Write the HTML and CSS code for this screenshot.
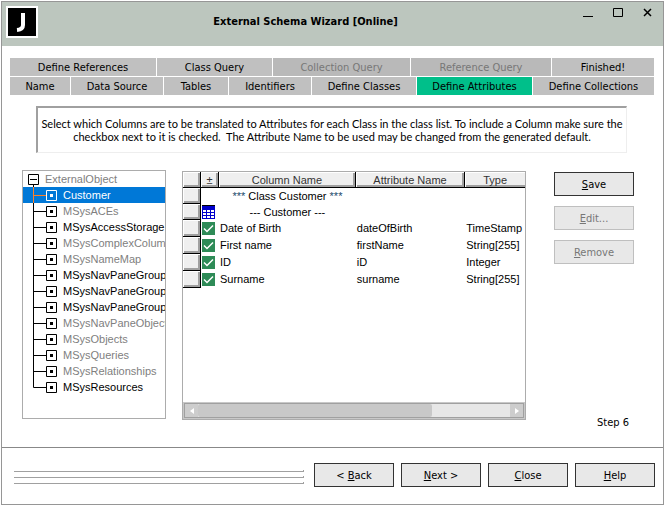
FILE: index.html
```html
<!DOCTYPE html>
<html lang="en">
<head>
    <meta charset="UTF-8">
    <meta name="viewport" content="width=device-width, initial-scale=1.0">
    <title>External Schema Wizard</title>
    <link rel="stylesheet" href="styles.css">
</head>
<body>
    <svg class="defs" width="0" height="0">
        <symbol id="node" viewBox="0 0 34 16">
            <path class="line" d="M10.5 0V16M11 8.5H23"/>
            <path class="box" d="M23.5 3.5h10v10h-10z"/>
            <path class="dot" d="M27 7h3v3h-3z"/>
        </symbol>
        <symbol id="node-last" viewBox="0 0 34 16">
            <path class="line" d="M10.5 0V8.5H23"/>
            <path class="box" d="M23.5 3.5h10v10h-10z"/>
            <path class="dot" d="M27 7h3v3h-3z"/>
        </symbol>
    </svg>

    <div class="window">
        <header class="titlebar">
            <svg class="logo" width="32" height="32" viewBox="0 0 32 32">
                <rect width="32" height="32" fill="#fff"/>
                <rect x="2" y="2" width="28" height="28" fill="#000"/>
                <path d="M17 7V19Q17 23.500 11 24" fill="none" stroke="#fff" stroke-width="4"/>
            </svg>
            <h1>External Schema Wizard [Online]</h1>
            <div class="window-controls">
                <button type="button" aria-label="Minimize"><svg width="10" height="10"><path d="M0 8.5h10"/></svg></button>
                <button type="button" aria-label="Maximize"><svg width="10" height="10"><path d="M.5 .5h9v8h-9z"/></svg></button>
                <button type="button" aria-label="Close window"><svg width="10" height="10"><path class="cross" d="M1 1l7 7M8 1l-7 7"/></svg></button>
            </div>
        </header>

        <nav class="tabs">
            <div class="tab-row tab-row-top">
                <button type="button">Define References</button>
                <button type="button">Class Query</button>
                <button type="button" disabled>Collection Query</button>
                <button type="button" disabled>Reference Query</button>
                <button type="button">Finished!</button>
            </div>
            <div class="tab-row tab-row-bottom">
                <button type="button">Name</button>
                <button type="button">Data Source</button>
                <button type="button">Tables</button>
                <button type="button">Identifiers</button>
                <button type="button">Define Classes</button>
                <button type="button" class="active">Define Attributes</button>
                <button type="button">Define Collections</button>
            </div>
        </nav>

        <p class="info">Select which Columns are to be translated to Attributes for each Class in the class list. To include a Column make sure the checkbox next to it is checked.&nbsp; The Attribute Name to be used may be changed from the generated default.</p>

        <main class="content">
            <ul class="tree">
                <li class="root muted"><svg width="16" height="16"><path class="line" d="M10.5 14V16"/><path class="box" d="M5.5 3.5h10v10h-10z"/><path class="box" d="M7 8.5h7"/></svg>ExternalObject</li>
                <li class="selected"><svg width="34" height="16"><use href="#node"/></svg>Customer</li>
                <li class="muted"><svg width="34" height="16"><use href="#node"/></svg>MSysACEs</li>
                <li><svg width="34" height="16"><use href="#node"/></svg>MSysAccessStorage</li>
                <li class="muted"><svg width="34" height="16"><use href="#node"/></svg>MSysComplexColumn</li>
                <li class="muted"><svg width="34" height="16"><use href="#node"/></svg>MSysNameMap</li>
                <li><svg width="34" height="16"><use href="#node"/></svg>MSysNavPaneGroupC</li>
                <li><svg width="34" height="16"><use href="#node"/></svg>MSysNavPaneGroupT</li>
                <li><svg width="34" height="16"><use href="#node"/></svg>MSysNavPaneGroups</li>
                <li class="muted"><svg width="34" height="16"><use href="#node"/></svg>MSysNavPaneObjectI</li>
                <li class="muted"><svg width="34" height="16"><use href="#node"/></svg>MSysObjects</li>
                <li class="muted"><svg width="34" height="16"><use href="#node"/></svg>MSysQueries</li>
                <li class="muted"><svg width="34" height="16"><use href="#node"/></svg>MSysRelationships</li>
                <li><svg width="34" height="16"><use href="#node-last"/></svg>MSysResources</li>
            </ul>

            <div class="grid">
                <table>
                    <colgroup>
                        <col class="col-head">
                        <col class="col-check">
                        <col class="col-name">
                        <col class="col-attr">
                        <col class="col-type">
                    </colgroup>
                    <thead>
                        <tr><th></th><th>±</th><th>Column Name</th><th>Attribute Name</th><th>Type</th></tr>
                    </thead>
                    <tbody>
                        <tr class="group"><th></th><td></td><td><span class="stars">***</span> Class Customer <span class="stars">***</span></td><td></td><td></td></tr>
                        <tr class="group">
                            <th></th>
                            <td><svg width="13" height="14"><path fill="#00c" d="M0 0h13v14H0z"/><path fill="#000" d="M0 0h13v1H0z"/><path fill="#fff" d="M1 5h3v2H1zM5 5h3v2H5zM9 5h3v2H9zM1 8h3v2H1zM5 8h3v2H5zM9 8h3v2H9zM1 11h3v2H1zM5 11h3v2H5zM9 11h3v2H9z"/></svg></td>
                            <td>--- Customer ---</td><td></td><td></td>
                        </tr>
                        <tr><th></th><td><input type="checkbox" aria-label="Date of Birth" checked></td><td>Date of Birth</td><td>dateOfBirth</td><td>TimeStamp</td></tr>
                        <tr><th></th><td><input type="checkbox" aria-label="First name" checked></td><td>First name</td><td>firstName</td><td>String[255]</td></tr>
                        <tr><th></th><td><input type="checkbox" aria-label="ID" checked></td><td>ID</td><td>iD</td><td>Integer</td></tr>
                        <tr><th></th><td><input type="checkbox" aria-label="Surname" checked></td><td>Surname</td><td>surname</td><td>String[255]</td></tr>
                    </tbody>
                </table>
                <div class="scrollbar">
                    <button type="button" aria-label="Scroll left"><svg width="4" height="6"><path d="M4 0v6L0 3z"/></svg></button>
                    <div class="track"><div class="thumb"></div></div>
                    <button type="button" aria-label="Scroll right"><svg width="4" height="6"><path d="M0 0v6L4 3z"/></svg></button>
                </div>
            </div>

            <div class="side">
                <button type="button" class="btn"><u>S</u>ave</button>
                <button type="button" class="btn" disabled><u>E</u>dit...</button>
                <button type="button" class="btn" disabled><u>R</u>emove</button>
                <span class="step">Step 6</span>
            </div>
        </main>

        <footer class="footer">
            <div class="rules"><hr><hr><hr></div>
            <button type="button" class="btn">&lt; <u>B</u>ack</button>
            <button type="button" class="btn"><u>N</u>ext &gt;</button>
            <button type="button" class="btn"><u>C</u>lose</button>
            <button type="button" class="btn"><u>H</u>elp</button>
        </footer>
    </div>
</body>
</html>
```
FILE: styles.css
```css
* {
    box-sizing: border-box;
}
body {
    margin: 0;
    padding: 1px;
    background-color: #fff;
    color: #000;
    font-family: Tahoma, "DejaVu Sans Condensed", "DejaVu Sans", sans-serif;
    font-size: 11px;
}
button {
    padding: 0;
    border: none;
    color: inherit;
    font: inherit;
}
svg {
    display: block;
    flex: none;
}
.defs {
    position: absolute;
}
.window {
    display: flex;
    flex-direction: column;
    min-height: calc(100vh - 2px);
    border: 1px solid #969696;
}

/* title bar */
.titlebar {
    display: grid;
    grid-template-columns: 1fr auto 1fr;
    height: 44px;
    padding: 4px;
    background-color: #bcc6be;
}
h1 {
    margin: 0;
    padding: 8px 54px 0 0;
    font-size: 11px;
    line-height: 16px;
}
.window-controls {
    display: flex;
    justify-content: flex-end;
    gap: 20px;
    padding: 2px 6px;
}
.window-controls button {
    height: 10px;
    background: none;
}
.window-controls path {
    fill: none;
    stroke: #000;
}
.window-controls .cross {
    stroke-width: 1.5;
}

/* wizard steps */
.tabs {
    display: grid;
    gap: 1px;
    margin: 12px 9px 11px 8px;
}
.tab-row {
    display: grid;
    gap: 1px;
}
.tab-row-top {
    grid-template-columns: 146fr 115fr 137fr 140fr 102fr;
}
.tab-row-bottom {
    grid-template-columns: 60fr 92fr 64fr 82fr 104fr 115fr 121fr;
}
.tab-row button {
    height: 18px;
    background-color: #c0c0c0;
    white-space: nowrap;
}
.tab-row button:disabled {
    background-color: #b9b9b9;
    color: #777;
}
.tab-row .active {
    background-color: #00bf8a;
}

.info {
    margin: 0 36px 17px 34px;
    padding: 9px 0;
    border: 2px solid #a0a0a0;
    border-right: 1px solid #eee;
    border-bottom: 1px solid #eee;
    font-family: Tahoma, Lato, sans-serif;
    line-height: 13px;
    text-align: center;
}

.content {
    display: flex;
    flex: 1;
    padding: 0 29px 0 20px;
}

/* class list */
.tree {
    flex: 142;
    min-width: 0;
    margin: 0 16px 28px 0;
    padding: 0;
    overflow: hidden;
    border: 1px solid #acacac;
    font-family: "Liberation Sans", Arial, sans-serif;
    list-style: none;
}
.tree li {
    display: flex;
    gap: 6px;
    height: 16px;
    line-height: 16px;
    white-space: nowrap;
}
.tree .muted {
    color: #808080;
}
.tree .selected {
    background-color: #0078d7;
    color: #fff;
}
.selected svg {
    --node: #fff;
    --link: #ff7f27;
}
.line {
    fill: none;
    stroke: var(--link, #000);
}
.box {
    fill: none;
    stroke: var(--node, #000);
}
.dot {
    fill: var(--node, #000);
}

/* attribute grid */
.grid {
    display: flex;
    flex: 342;
    flex-direction: column;
    justify-content: space-between;
    min-width: 0;
    margin: 1px 0 27px;
    border: 1px solid #acacac;
    font-family: "Liberation Sans", Arial, sans-serif;
}
table {
    width: 100%;
    border-spacing: 0;
    table-layout: fixed;
}
.col-head,
.col-check {
    width: 18px;
}
.col-name {
    width: 40%;
}
.col-attr {
    width: 32%;
}
th {
    height: 17px;
    padding: 0;
    border-right: 1px solid #000;
    border-bottom: 1px solid #000;
    background-color: #efefef;
    box-shadow: inset 1px 1px #fff, inset -2px -2px #a0a0a0;
    color: #333;
    font-weight: normal;
    line-height: 14px;
}
thead th,
.group th {
    height: 16px;
}
th:last-child {
    border-right: none;
    box-shadow: inset 1px 1px #fff, inset 0 -2px #a0a0a0;
}
td {
    padding: 0 1px;
    line-height: 15px;
    white-space: nowrap;
}
.group td:nth-child(3) {
    text-align: center;
}
.stars {
    color: #1b4a6b;
}
td input {
    display: block;
    width: 13px;
    height: 13px;
    margin: 0;
    appearance: none;
    background-color: #2e8b57;
}
td input:checked {
    background-image: url("data:image/svg+xml,%3Csvg xmlns='http://www.w3.org/2000/svg' viewBox='0 0 13 13'%3E%3Cpath d='M2 6.500l3 3 6-6' fill='none' stroke='%23fff' stroke-width='1.500'/%3E%3C/svg%3E");
}
.scrollbar {
    display: flex;
    height: 17px;
    padding: 1px;
    border: 1px solid #c8c8c8;
    outline: 1px solid #a0a0a0;
    outline-offset: -2px;
}
.scrollbar button {
    display: flex;
    align-items: center;
    justify-content: center;
    width: 13px;
    background-color: #cdcdcd;
}
.scrollbar path {
    fill: #fff;
}
.track {
    flex: 1;
    background-color: #e7e7e7;
}
.thumb {
    width: 75%;
    height: 100%;
    border-radius: 2px;
    background-color: #c8c8c8;
}

/* buttons */
.side {
    display: flex;
    flex-direction: column;
    gap: 10px;
    margin: 2px 0 0 28px;
}
.btn {
    width: 80px;
    height: 24px;
    border: 1px solid #333;
    background-color: #e8e8e8;
}
.btn:disabled {
    border-color: #bfbfbf;
    color: #777;
}
.step {
    margin: auto 0 16px 43px;
    line-height: 16px;
}

.footer {
    display: flex;
    gap: 7px;
    padding: 15px 8px 17px 12px;
    border-top: 1px solid #888;
}
.rules {
    display: grid;
    flex: 1;
    gap: 4px;
    align-content: start;
    margin: 7px 3px 0 0;
}
.rules hr {
    width: 100%;
    height: 2px;
    margin: 0;
    border: solid #a0a0a0;
    border-width: 0 1px 1px 0;
}
```
